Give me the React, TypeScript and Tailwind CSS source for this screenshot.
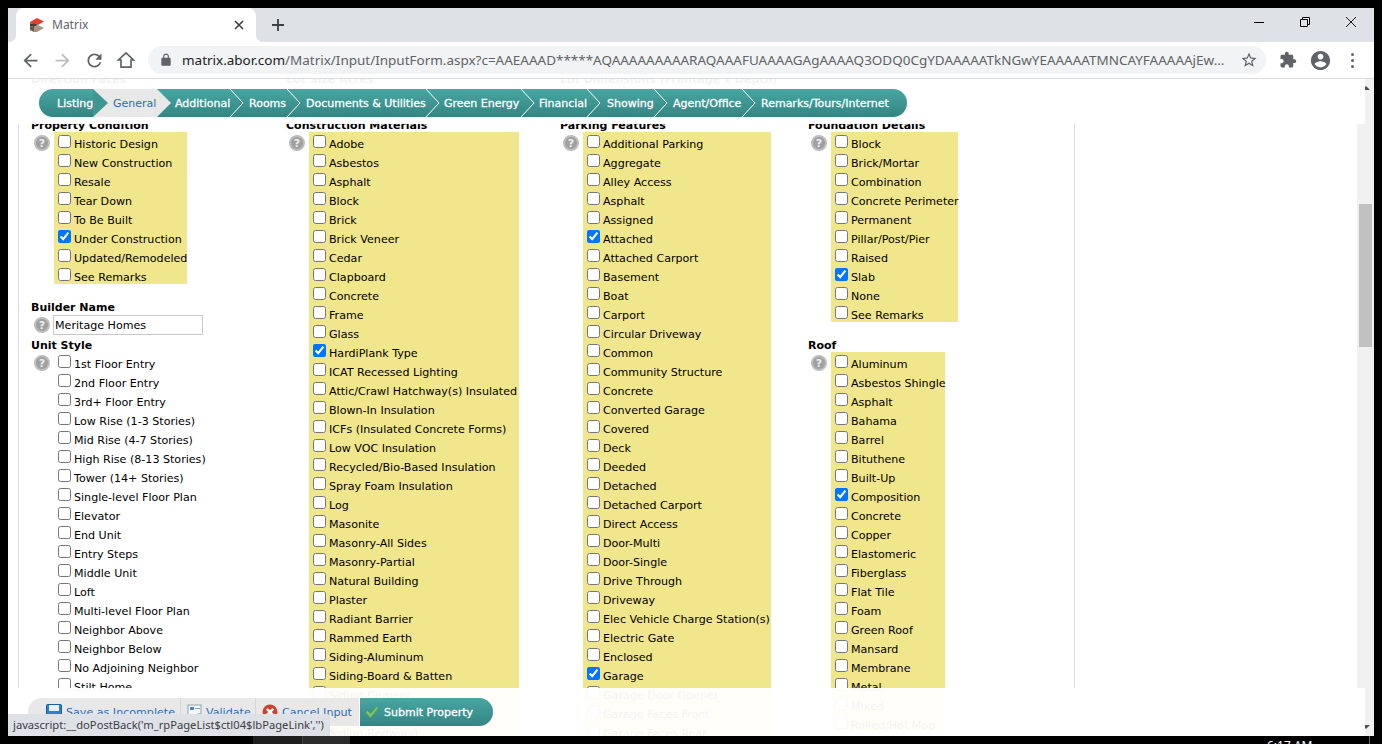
import React from "react";

const FORM_FONT = "font-['DejaVu_Sans',sans-serif]";
const CHROME_FONT = "font-['Noto_Sans',sans-serif]";

interface Option {
  label: string;
  checked?: boolean;
}

const opts = (labels: string[], checked: string[] = []): Option[] =>
  labels.map((label) => ({ label, checked: checked.includes(label) }));

const propertyCondition = opts(
  ["Historic Design", "New Construction", "Resale", "Tear Down", "To Be Built", "Under Construction", "Updated/Remodeled", "See Remarks"],
  ["Under Construction"]
);
const unitStyle = opts([
  "1st Floor Entry", "2nd Floor Entry", "3rd+ Floor Entry", "Low Rise (1-3 Stories)", "Mid Rise (4-7 Stories)", "High Rise (8-13 Stories)",
  "Tower (14+ Stories)", "Single-level Floor Plan", "Elevator", "End Unit", "Entry Steps", "Middle Unit", "Loft", "Multi-level Floor Plan",
  "Neighbor Above", "Neighbor Below", "No Adjoining Neighbor", "Stilt Home",
]);
const materials = opts(
  [
    "Adobe", "Asbestos", "Asphalt", "Block", "Brick", "Brick Veneer", "Cedar", "Clapboard", "Concrete", "Frame", "Glass", "HardiPlank Type",
    "ICAT Recessed Lighting", "Attic/Crawl Hatchway(s) Insulated", "Blown-In Insulation", "ICFs (Insulated Concrete Forms)", "Low VOC Insulation",
    "Recycled/Bio-Based Insulation", "Spray Foam Insulation", "Log", "Masonite", "Masonry-All Sides", "Masonry-Partial", "Natural Building", "Plaster",
    "Radiant Barrier", "Rammed Earth", "Siding-Aluminum", "Siding-Board & Batten", "Siding-Cement", "Siding-Mixed", "Siding-Redwood",
  ],
  ["HardiPlank Type"]
);
const parking = opts(
  [
    "Additional Parking", "Aggregate", "Alley Access", "Asphalt", "Assigned", "Attached", "Attached Carport", "Basement", "Boat", "Carport",
    "Circular Driveway", "Common", "Community Structure", "Concrete", "Converted Garage", "Covered", "Deck", "Deeded", "Detached", "Detached Carport",
    "Direct Access", "Door-Multi", "Door-Single", "Drive Through", "Driveway", "Elec Vehicle Charge Station(s)", "Electric Gate", "Enclosed", "Garage",
    "Garage Door Opener", "Garage Faces Front", "Garage Faces Rear",
  ],
  ["Attached", "Garage"]
);
const foundation = opts(
  ["Block", "Brick/Mortar", "Combination", "Concrete Perimeter", "Permanent", "Pillar/Post/Pier", "Raised", "Slab", "None", "See Remarks"],
  ["Slab"]
);
const roof = opts(
  [
    "Aluminum", "Asbestos Shingle", "Asphalt", "Bahama", "Barrel", "Bituthene", "Built-Up", "Composition", "Concrete", "Copper", "Elastomeric",
    "Fiberglass", "Flat Tile", "Foam", "Green Roof", "Mansard", "Membrane", "Metal", "Mixed", "Rolled/Hot Mop",
  ],
  ["Composition"]
);

const HelpIcon = () => (
  <span className="flex h-4 w-4 shrink-0 items-center justify-center rounded-full border-2 border-[#bdbdbd] bg-[#a0a0a0] text-[11px] leading-none font-bold text-[#eeeeee]">
    ?
  </span>
);

const Heading = ({ children }: { children: React.ReactNode }) => (
  <div className="h-[14px] pt-px text-[11px] leading-[14px] font-bold whitespace-nowrap text-black">{children}</div>
);

const CheckList = ({ items, width, yellow = true }: { items: Option[]; width?: string; yellow?: boolean }) => (
  <div className="flex items-start">
    <div className="mt-[3px] flex h-4 w-[23px] shrink-0 justify-center pr-[1px]">
      <HelpIcon />
    </div>
    <div className={`${yellow ? "bg-[#f0e68c]" : ""} ${width ?? ""} shrink-0`}>
      {items.map((item) => (
        <label key={item.label} className="flex h-[19px] items-start pl-1 whitespace-nowrap">
          <input type="checkbox" defaultChecked={item.checked} className="m-0 mt-[3px] h-[13px] w-[13px] shrink-0" />
          <span className="ml-[3px] pt-[6px] text-[11.1px] leading-[14px] text-black">{item.label}</span>
        </label>
      ))}
    </div>
  </div>
);

const Chevron = () => (
  <svg viewBox="0 0 14 28" className="h-7 w-[14px] shrink-0">
    <polyline points="0,0 13,14 0,28" fill="none" stroke="#ffffff" strokeWidth="1" />
  </svg>
);

const NavBar = () => {
  const steps = [
    { label: "Additional", w: "w-[59px]", pl: "pl-[4px]" },
    { label: "Rooms", w: "w-[43px]", pl: "pl-[5px]" },
    { label: "Documents & Utilities", w: "w-[125px]", pl: "pl-[5px]" },
    { label: "Green Energy", w: "w-[81px]", pl: "pl-[4px]" },
    { label: "Financial", w: "w-[52px]", pl: "pl-[4px]" },
    { label: "Showing", w: "w-[53px]", pl: "pl-[6px]" },
    { label: "Agent/Office", w: "w-[74px]", pl: "pl-[5px]" },
  ];
  return (
    <div className="absolute top-[10px] left-[31px] flex h-7 w-[868px] items-center overflow-hidden rounded-full bg-gradient-to-b from-[#49a6a2] to-[#338583] text-[11px] text-white [-webkit-text-stroke:0.3px_white]">
      <span className="w-[54px] shrink-0 pt-[2px] pl-[18px]">Listing</span>
      <svg viewBox="0 0 15 28" className="h-7 w-[15px] shrink-0">
        <rect width="15" height="28" fill="#e8e8e8" />
        <polygon points="0,0 15,14 0,28" fill="#3f9794" />
      </svg>
      <span className="flex h-7 w-[49px] shrink-0 items-center bg-[#e8e8e8] pt-[2px] pl-[5px] text-[#2a6ebb] [-webkit-text-stroke:0]">General</span>
      <svg viewBox="0 0 14 28" className="h-7 w-[14px] shrink-0">
        <polygon points="0,0 14,14 0,28" fill="#e8e8e8" />
      </svg>
      {steps.map((s) => (
        <React.Fragment key={s.label}>
          <span className={`${s.w} ${s.pl} shrink-0 pt-[2px] whitespace-nowrap`}>{s.label}</span>
          <Chevron />
        </React.Fragment>
      ))}
      <span className="pt-[2px] pl-[5px] whitespace-nowrap">Remarks/Tours/Internet</span>
    </div>
  );
};

const ActionBar = () => (
  <div className="absolute top-[619px] left-5 flex h-7 w-[465px] items-center overflow-hidden rounded-full bg-[#e8e8e8] text-[11.1px] text-[#2a6ebb]">
    <div className="flex h-full w-[153px] shrink-0 items-center border-r border-[#d8d8d8] pl-[18px]">
      <svg viewBox="0 0 16 16" className="h-4 w-4 shrink-0">
        <rect x="0.5" y="0.5" width="15" height="15" rx="1" fill="#2f7fd0" stroke="#1c5aa0" />
        <rect x="3" y="1" width="10" height="6" fill="#e6f0fa" />
        <rect x="4" y="10" width="8" height="5" fill="#cfd8e2" />
      </svg>
      <span className="ml-1 pt-[2px] whitespace-nowrap">Save as Incomplete</span>
    </div>
    <div className="flex h-full w-[75px] shrink-0 items-center border-r border-[#d8d8d8] pl-[6px]">
      <svg viewBox="0 0 16 16" className="h-4 w-4 shrink-0">
        <rect x="1" y="1" width="13" height="14" fill="#f4f7fa" stroke="#8fa3b5" />
        <rect x="3" y="3" width="4" height="3" fill="#4f86c6" />
        <rect x="8" y="4" width="5" height="1" fill="#8fa3b5" />
        <circle cx="12" cy="13" r="3.5" fill="#3d9b3d" />
      </svg>
      <span className="ml-[3px] pt-[2px]">Validate</span>
    </div>
    <div className="flex h-full w-[103px] shrink-0 items-center pl-[6px]">
      <svg viewBox="0 0 16 16" className="h-4 w-4 shrink-0">
        <circle cx="8" cy="8" r="7.5" fill="#d2402c" />
        <path d="M4.8 4.8l6.4 6.4M11.2 4.8l-6.4 6.4" stroke="#ffffff" strokeWidth="2.4" />
      </svg>
      <span className="ml-1 pt-[2px] whitespace-nowrap">Cancel Input</span>
    </div>
    <div className="flex h-full flex-1 items-center border-l border-white bg-gradient-to-b from-[#49a6a2] to-[#338583] pl-[4px] text-[11px] text-white [-webkit-text-stroke:0.3px_white]">
      <svg viewBox="0 0 16 16" className="h-4 w-4 shrink-0">
        <path d="M1.5 8.5l2-2 3 3 6-7 2 1.5-8 10z" fill="#7cc36a" stroke="#4f9a45" strokeWidth="0.6" />
      </svg>
      <span className="ml-1 pt-[2px] whitespace-nowrap">Submit Property</span>
    </div>
  </div>
);

const Form = () => (
  <div className={`ml-[10px] flex h-[609px] w-[1057px] shrink-0 flex-col border-x border-[#dddddd] pl-3 ${FORM_FONT}`}>
    <div className="-mt-[7px] flex">
      <div className="w-[255px] shrink-0">
        <Heading>Direction Faces</Heading>
        <div className="mt-[3px] ml-[3px]"><HelpIcon /></div>
      </div>
      <div className="w-[274px] shrink-0">
        <Heading>Lot Size Acres</Heading>
      </div>
      <Heading>Lot Dimensions (Frontage x Depth)</Heading>
    </div>
    <div className="mt-[13px] flex">
      <div className="w-[255px] shrink-0">
        <Heading>Property Condition</Heading>
        <CheckList items={propertyCondition} width="w-[133px]" />
        <div className="mt-4">
          <Heading>Builder Name</Heading>
        </div>
        <div className="mt-[1px] flex h-5 items-center">
          <div className="flex w-[22px] shrink-0 justify-center"><HelpIcon /></div>
          <div className="flex h-5 w-[150px] items-center border border-[#c8c8c8] pt-[2px] pl-[1px] text-[11.1px] text-black">Meritage Homes</div>
        </div>
        <div className="mt-[3px]">
          <Heading>Unit Style</Heading>
        </div>
        <CheckList items={unitStyle} yellow={false} />
      </div>
      <div className="w-[274px] shrink-0">
        <Heading>Construction Materials</Heading>
        <CheckList items={materials} width="w-[210px]" />
      </div>
      <div className="w-[248px] shrink-0">
        <Heading>Parking Features</Heading>
        <CheckList items={parking} width="w-[188px]" />
      </div>
      <div className="shrink-0">
        <Heading>Foundation Details</Heading>
        <CheckList items={foundation} width="w-[127px]" />
        <div className="mt-4">
          <Heading>Roof</Heading>
        </div>
        <CheckList items={roof} width="w-[114px]" />
      </div>
    </div>
  </div>
);

export default function App() {
  return (
    <div className="flex h-[744px] w-[1382px] flex-col overflow-hidden bg-black">
      <div className="mx-2 mt-2 flex h-[728px] flex-col bg-white">
        {/* tab strip */}
        <div className={`flex h-[34px] shrink-0 items-end bg-[#dee1e6] pl-2 ${CHROME_FONT}`}>
          <div className="relative flex h-[34px] w-[240px] items-center rounded-t-lg bg-white pl-[13px] before:absolute before:bottom-0 before:-left-2 before:h-2 before:w-2 before:bg-[radial-gradient(circle_at_0_0,transparent_8px,white_8.5px)] after:absolute after:-right-2 after:bottom-0 after:h-2 after:w-2 after:bg-[radial-gradient(circle_at_100%_0,transparent_8px,white_8.5px)]">
            <svg viewBox="0 0 16 16" className="h-4 w-4 shrink-0">
              <polygon points="1,5 8,1 15,4.5 9,8 5,6 1,7" fill="#e5402a" />
              <polygon points="1,7 5,6 9,8 5,10 1,9" fill="#4a3a30" />
              <polygon points="5,10 9,8 15,11 8,15 5,15" fill="#a8957f" />
              <polygon points="1,9 5,10 5,15 1,13" fill="#6f5a4a" />
            </svg>
            <span className="ml-[7px] text-[12px] text-[#5f6368]">Matrix</span>
            <svg viewBox="0 0 12 12" className="mr-[11px] ml-auto h-3 w-3" stroke="#3c4043" strokeWidth="1.6">
              <path d="M2 2l8 8M10 2l-8 8" />
            </svg>
          </div>
          <div className="ml-2 flex h-[34px] w-7 items-center justify-center">
            <svg viewBox="0 0 14 14" className="h-[14px] w-[14px]" stroke="#3c4043" strokeWidth="1.8">
              <path d="M7 1v12M1 7h12" />
            </svg>
          </div>
          <div className="ml-auto flex h-[28px] self-start">
            <div className="flex w-[46px] items-center justify-center">
              <div className="h-px w-[10px] bg-black" />
            </div>
            <div className="flex w-[46px] items-center justify-center">
              <svg viewBox="0 0 10 10" className="h-[10px] w-[10px]" fill="none" stroke="#000000">
                <path d="M0.5 2.5h7v7h-7zM2.5 2.5v-2h7v7h-2" />
              </svg>
            </div>
            <div className="flex w-[46px] items-center justify-center">
              <svg viewBox="0 0 10 10" className="h-[10px] w-[10px]" stroke="#000000" strokeWidth="0.9">
                <path d="M0 0l10 10M10 0L0 10" />
              </svg>
            </div>
          </div>
        </div>

        {/* toolbar */}
        <div className={`flex h-[37px] shrink-0 items-start border-b border-[#dadce0] bg-white pl-[6px] ${CHROME_FONT}`}>
          <div className="flex h-9 w-8 items-center justify-center">
            <svg viewBox="0 0 24 24" className="h-[21px] w-[21px]" fill="#5f6368">
              <path d="M20 11H7.83l5.59-5.59L12 4l-8 8 8 8 1.41-1.41L7.83 13H20v-2z" />
            </svg>
          </div>
          <div className="flex h-9 w-8 items-center justify-center">
            <svg viewBox="0 0 24 24" className="h-[21px] w-[21px]" fill="#babcbe">
              <path d="M12 4l-1.41 1.41L16.17 11H4v2h12.17l-5.58 5.59L12 20l8-8z" />
            </svg>
          </div>
          <div className="flex h-9 w-8 items-center justify-center">
            <svg viewBox="0 0 24 24" className="h-[21px] w-[21px]" fill="#5f6368">
              <path d="M17.65 6.35C16.2 4.9 14.21 4 12 4c-4.42 0-7.99 3.58-7.99 8s3.57 8 7.99 8c3.73 0 6.84-2.55 7.73-6h-2.08c-.82 2.33-3.04 4-5.65 4-3.31 0-6-2.69-6-6s2.69-6 6-6c1.66 0 3.14.69 4.22 1.78L13 11h7V4l-2.35 2.35z" />
            </svg>
          </div>
          <div className="flex h-9 w-8 items-center justify-center">
            <svg viewBox="0 0 24 24" className="h-5 w-5" fill="none" stroke="#5f6368" strokeWidth="2">
              <path d="M12 3.5L3 12h3v8.5h12V12h3z" />
            </svg>
          </div>
          <div className="mt-1 ml-[6px] flex h-7 w-[1118px] items-center rounded-full bg-[#f1f3f4] pl-[11px]">
            <svg viewBox="0 0 24 24" className="h-[14px] w-[14px] shrink-0" fill="#5f6368">
              <path d="M18 8h-1V6c0-2.76-2.24-5-5-5S7 3.24 7 6v2H6c-1.1 0-2 .9-2 2v10c0 1.1.9 2 2 2h12c1.1 0 2-.9 2-2V10c0-1.1-.9-2-2-2zM9 6c0-1.66 1.34-3 3-3s3 1.34 3 3v2H9V6z" />
            </svg>
            <span className="ml-[9px] text-[13.47px] whitespace-nowrap text-[#5f6368]">
              <span className="text-[#202124]">matrix.abor.com</span>/Matrix/Input/InputForm.aspx?c=AAEAAAD*****AQAAAAAAAAARAQAAAFUAAAAGAgAAAAQ3ODQ0CgYDAAAAATkNGwYEAAAAATMNCAYFAAAAAjEw...
            </span>
            <svg viewBox="0 0 24 24" className="mr-2 ml-auto h-[18px] w-[18px] shrink-0" fill="#5f6368">
              <path d="M22 9.24l-7.19-.62L12 2 9.19 8.63 2 9.24l5.46 4.73L5.82 21 12 17.27 18.18 21l-1.63-7.03L22 9.24zM12 15.4l-3.76 2.27 1-4.28-3.32-2.88 4.38-.38L12 6.1l1.71 4.04 4.38.38-3.32 2.88 1 4.28L12 15.4z" />
            </svg>
          </div>
          <div className="ml-[6px] flex h-9 w-8 items-center justify-center">
            <svg viewBox="0 0 24 24" className="h-[18px] w-[18px]" fill="#5f6368">
              <path d="M20.5 11H19V7c0-1.1-.9-2-2-2h-4V3.5C13 2.12 11.88 1 10.5 1S8 2.12 8 3.5V5H4c-1.1 0-1.99.9-1.99 2v3.8H3.5c1.49 0 2.7 1.21 2.7 2.7s-1.21 2.7-2.7 2.7H2V20c0 1.1.9 2 2 2h3.8v-1.5c0-1.49 1.21-2.7 2.7-2.7 1.49 0 2.7 1.21 2.7 2.7V22H17c1.1 0 2-.9 2-2v-4h1.5c1.38 0 2.5-1.12 2.5-2.5S21.88 11 20.5 11z" />
            </svg>
          </div>
          <div className="flex h-9 w-8 items-center justify-center">
            <svg viewBox="0 0 24 24" className="h-[23px] w-[23px]" fill="#5f6368">
              <path d="M12 2C6.48 2 2 6.48 2 12s4.48 10 10 10 10-4.48 10-10S17.52 2 12 2zm0 3c1.66 0 3 1.34 3 3s-1.34 3-3 3-3-1.34-3-3 1.34-3 3-3zm0 14.2c-2.5 0-4.71-1.28-6-3.22.03-1.99 4-3.08 6-3.08 1.99 0 5.97 1.09 6 3.08-1.29 1.94-3.5 3.22-6 3.22z" />
            </svg>
          </div>
          <div className="flex h-9 w-8 flex-col items-center justify-center gap-[3px]">
            <span className="h-[3px] w-[3px] rounded-full bg-[#5f6368]" />
            <span className="h-[3px] w-[3px] rounded-full bg-[#5f6368]" />
            <span className="h-[3px] w-[3px] rounded-full bg-[#5f6368]" />
          </div>
        </div>

        {/* page */}
        <div className="relative flex min-h-0 flex-1 overflow-hidden">
          <div className="min-w-0 flex-1 overflow-hidden">
            <Form />
          </div>
          <div className="flex w-[17px] shrink-0 flex-col items-center bg-[#f1f1f1]">
            <svg viewBox="0 0 8 4" className="mt-[7px] h-1 w-2 shrink-0">
              <polygon points="0,4 4,0 8,4" fill="#505050" />
            </svg>
            <div className="mt-[114px] h-[143px] w-[13px] shrink-0 bg-[#c1c1c1]" />
            <svg viewBox="0 0 8 4" className="mt-auto mb-[7px] h-1 w-2 shrink-0">
              <polygon points="0,0 8,0 4,4" fill="#505050" />
            </svg>
          </div>
          <div className="absolute top-0 left-0 h-[45px] w-[1357px] bg-white/95" />
          <div className="absolute top-[609px] left-0 h-12 w-[1357px] bg-white/95" />
          <div className={FORM_FONT}>
            <NavBar />
            <ActionBar />
          </div>
          <div className={`absolute bottom-0 left-0 flex h-[22px] w-[322px] items-center rounded-tr-sm bg-[#dee1e6] pl-[5px] text-[11.2px] whitespace-nowrap text-[#3c4043] ${CHROME_FONT}`}>
            javascript:__doPostBack('m_rpPageList$ctl04$lbPageLink','')
          </div>
        </div>
      </div>

      {/* taskbar sliver */}
      <div className="relative flex h-2 shrink-0 overflow-hidden">
        <div className="ml-[253px] h-2 w-[49px] bg-[#1e1e1e]" />
        <div className="h-2 w-12 border-l border-[#444444] bg-[#2a2a2a]" />
        <span className={`absolute top-[2px] left-[1267px] text-[12px] leading-[16px] text-white ${CHROME_FONT}`}>6:17 AM</span>
        <div className="absolute top-0 left-[1369px] h-2 w-px bg-[#666666]" />
      </div>
    </div>
  );
}
